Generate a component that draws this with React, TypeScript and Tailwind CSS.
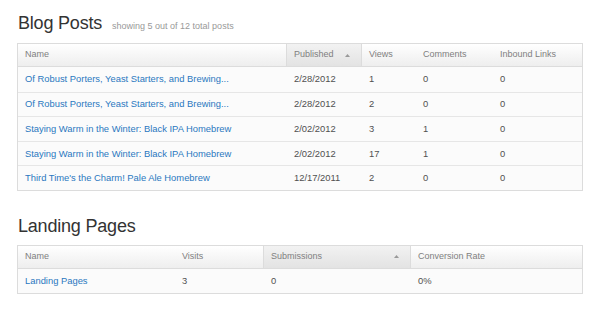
const font = { fontFamily: '"Liberation Sans", Arial, sans-serif' };

interface Col {
    label: string;
    width: string;
    sorted?: boolean;
}

const blogCols: Col[] = [
    {label: "Name", width: "w-[268px]"},
    {label: "Published", width: "w-[75px]", sorted: true},
    {label: "Views", width: "w-[55px]"},
    {label: "Comments", width: "w-[77px]"},
    {label: "Inbound Links", width: "flex-1"},
];

const blogRows = [
    ["Of Robust Porters, Yeast Starters, and Brewing...", "2/28/2012", "1", "0", "0"],
    ["Of Robust Porters, Yeast Starters, and Brewing...", "2/28/2012", "2", "0", "0"],
    ["Staying Warm in the Winter: Black IPA Homebrew", "2/02/2012", "3", "1", "0"],
    ["Staying Warm in the Winter: Black IPA Homebrew", "2/02/2012", "17", "1", "0"],
    ["Third Time's the Charm! Pale Ale Homebrew", "12/17/2011", "2", "0", "0"],
];

const landingCols: Col[] = [
    {label: "Name", width: "w-[157px]"},
    {label: "Visits", width: "w-[88px]"},
    {label: "Submissions", width: "w-[147px]", sorted: true},
    {label: "Conversion Rate", width: "flex-1"},
];

const landingRows = [["Landing Pages", "3", "0", "0%"]];

const SortArrow = () => (
    <svg width="5" height="3" viewBox="0 0 5 3" className="ml-auto mr-[4px]">
        <path d="M0 3 L2.5 0 L5 3 Z" fill="#999"/>
    </svg>
);

const DataTable = ({cols, rows, rowH}: { cols: Col[]; rows: string[][]; rowH: string }) => (
    <div className="mx-[17px] border border-[#dcdcdc]">
        <div className="flex h-[23px] bg-gradient-to-b from-[#ffffff] to-[#eeeeee] border-b border-[#dcdcdc]">
            {cols.map((c, i) => {
                const prevSorted = i > 0 && cols[i - 1].sorted;
                return (
                    <div
                        key={c.label}
                        className={`${c.width} flex items-center px-[7px] text-[9px] text-[#808080] ${c.sorted || prevSorted ? "border-l border-[#dcdcdc]" : ""} ${c.sorted ? "bg-gradient-to-b from-[#f2f2f2] to-[#e3e3e3]" : ""}`}
                    >
                        {c.label}
                        {c.sorted && <SortArrow/>}
                    </div>
                );
            })}
        </div>
        {rows.map((r, ri) => (
            <div key={ri} className={`flex ${rowH} bg-[#fbfbfb] ${ri > 0 ? "border-t border-[#e6e6e6]" : ""}`}>
                {r.map((v, i) => {
                    const border = i > 0 && (cols[i].sorted || cols[i - 1].sorted);
                    return (
                        <div
                            key={i}
                            className={`${cols[i].width} flex items-center px-[7px] text-[9.4px] ${border ? "border-l border-transparent" : ""} ${i === 0 ? "text-[#2a78c0]" : "text-[#505050]"}`}
                        >
                            {v}
                        </div>
                    );
                })}
            </div>
        ))}
    </div>
);

const App = () => {
    return (
        <div className="w-[600px] h-[315px] bg-white overflow-hidden" style={font}>
            <div className="flex items-baseline px-[18px] pt-[12px] h-[43px]">
                <h1 className="text-[18px] text-[#333] leading-[22px] tracking-[-0.2px]">Blog Posts</h1>
                <span className="ml-[10px] text-[9px] text-[#999]">showing 5 out of 12 total posts</span>
            </div>
            <DataTable cols={blogCols} rows={blogRows} rowH="h-[24.6px]"/>

            <h2 className="px-[18px] mt-[24px] h-[30px] text-[18px] text-[#333] leading-[22px] tracking-[-0.2px]">
                Landing Pages
            </h2>
            <DataTable cols={landingCols} rows={landingRows} rowH="h-[24px]"/>
        </div>
    );
};

export default App;
